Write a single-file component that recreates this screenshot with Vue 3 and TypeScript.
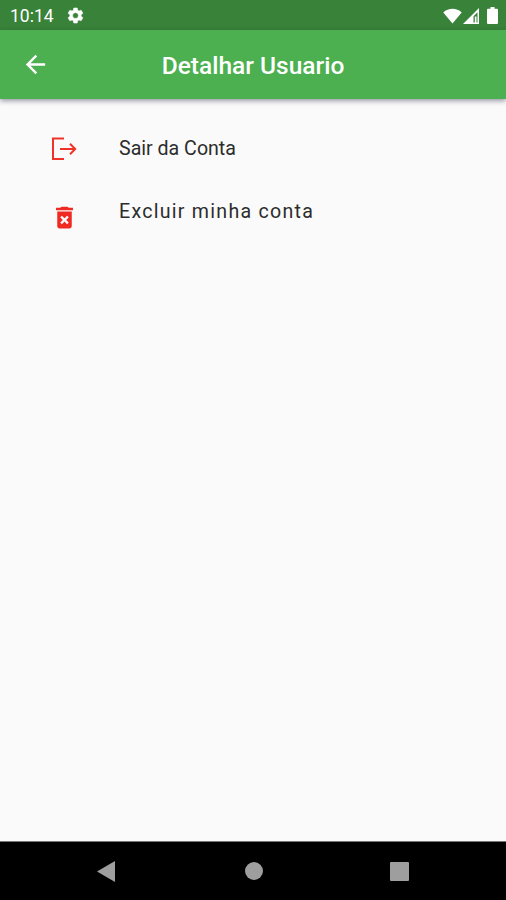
<script setup lang="ts">
import { ref } from 'vue'

type ActionIcon = 'logout' | 'delete'

interface AccountAction {
  label: string
  icon: ActionIcon
}

const title = ref('Detalhar Usuario')
const clock = ref('10:14')
const actions: AccountAction[] = [
  { label: 'Sair da Conta', icon: 'logout' },
  { label: 'Excluir minha conta', icon: 'delete' },
]
</script>

<template>
  <div class="screen">
    <header class="status-bar">
      <span class="clock">{{ clock }}</span>
      <svg class="gear" viewBox="0 0 24 24">
        <path d="M19.14 12.94c.04-.3.06-.61.06-.94 0-.32-.02-.64-.07-.94l2.03-1.58a.49.49 0 0 0 .12-.61l-1.92-3.32a.488.488 0 0 0-.59-.22l-2.39.96c-.5-.38-1.03-.7-1.62-.94l-.36-2.54a.484.484 0 0 0-.48-.41h-3.84c-.24 0-.43.17-.47.41l-.36 2.54c-.59.24-1.13.57-1.62.94l-2.39-.96a.488.488 0 0 0-.59.22L2.74 8.87c-.12.21-.08.47.12.61l2.03 1.58c-.05.3-.09.63-.09.94s.02.64.07.94l-2.03 1.58a.49.49 0 0 0-.12.61l1.92 3.32c.12.22.37.29.59.22l2.39-.96c.5.38 1.03.7 1.62.94l.36 2.54c.05.24.24.41.48.41h3.84c.24 0 .44-.17.47-.41l.36-2.54c.59-.24 1.13-.56 1.62-.94l2.39.96c.22.08.47 0 .59-.22l1.92-3.32a.49.49 0 0 0-.12-.61zM12 15.6A3.6 3.6 0 1 1 12 8.4a3.6 3.6 0 0 1 0 7.2z" />
      </svg>
      <div class="indicators">
        <svg class="wifi" viewBox="0 0 20 16"><path d="M10 16 .3 4.200C5.500-.9 14.500-.9 19.700 4.200z" /></svg>
        <svg class="signal" viewBox="0 0 16 16">
          <path fill-rule="evenodd" d="M16 0v16H0zM14.500 4.200 10.500 8.300V14.500h1.300V8.500h1.700v6h1z" />
        </svg>
        <svg class="battery" viewBox="0 0 11 17"><path d="M3.500 0h4v1.700H10q1 0 1 1V16q0 1-1 1H1q-1 0-1-1V2.700q0-1 1-1h2.500z" /></svg>
      </div>
    </header>

    <nav class="app-bar">
      <button class="back" type="button" aria-label="Voltar">
        <svg viewBox="0 0 24 24"><path d="M20 11H7.830l5.590-5.590L12 4l-8 8 8 8 1.410-1.410L7.830 13H20v-2z" /></svg>
      </button>
      <h1>{{ title }}</h1>
    </nav>

    <main class="actions">
      <button v-for="action in actions" :key="action.icon" class="action" :class="action.icon" type="button">
        <span class="icon-slot">
          <svg v-if="action.icon === 'logout'" class="logout-icon" viewBox="0 0 26 24">
            <path d="M13 1.500H2v20.500h11M9 12h15.500M19 6.800l5.200 5.200-5.200 5.200" />
          </svg>
          <svg v-else class="delete-icon" viewBox="0 0 24 24">
            <path d="M6 19c0 1.100.9 2 2 2h8c1.100 0 2-.9 2-2V7H6v12zm2.460-7.120 1.410-1.410L12 12.590l2.120-2.120 1.410 1.410L13.410 14l2.120 2.120-1.410 1.410L12 15.410l-2.120 2.120-1.410-1.410L10.590 14l-2.130-2.120zM15.500 4l-1-1h-5l-1 1H5v2h14V4z" />
          </svg>
        </span>
        <span class="label">{{ action.label }}</span>
      </button>
    </main>

    <footer class="system-nav">
      <svg class="nav-back" viewBox="0 0 18 21"><path d="M18 0v21L0 10.500z" /></svg>
      <span class="nav-home"></span>
      <span class="nav-recent"></span>
    </footer>
  </div>
</template>

<style>
body {
  margin: 0;
}
</style>

<style scoped>
.screen {
  display: flex;
  flex-direction: column;
  height: 100vh;
  background: #fafafa;
  font-family: Roboto, "Liberation Sans", sans-serif;
  overflow: hidden;
}
.status-bar {
  display: flex;
  align-items: center;
  box-sizing: border-box;
  height: 30px;
  padding: 1px 8px 0 10px;
  background: #388239;
  color: #fff;
}
.clock {
  width: 56px;
  padding-top: 1px;
  font-size: 17.5px;
  line-height: 28px;
}
.status-bar svg {
  display: block;
  fill: #fff;
}
.gear {
  width: 19px;
  height: 19px;
}
.gear path {
  stroke: #fff;
  stroke-width: 0.6px;
}
.indicators {
  display: flex;
  align-items: center;
  margin-left: auto;
}
.wifi {
  width: 19px;
  height: 16px;
}
.signal {
  width: 16px;
  height: 16px;
  margin-left: 1px;
}
.battery {
  width: 11px;
  height: 17px;
  margin-left: 8px;
}
.app-bar {
  display: grid;
  grid-template-columns: 70px 1fr 70px;
  align-items: center;
  height: 69px;
  background: #4caf50;
  box-shadow: 0 2px 5px rgba(30, 30, 60, 0.45);
}
button {
  padding: 0;
  border: 0;
  background: none;
  font: inherit;
  text-align: left;
}
.back {
  display: flex;
  justify-content: center;
}
.back svg {
  width: 29px;
  height: 29px;
  fill: #fff;
}
h1 {
  margin: 2px 0 0;
  color: #fff;
  font-size: 24.5px;
  font-weight: 500;
  line-height: 32px;
  text-align: center;
  white-space: nowrap;
}
.actions {
  flex: 1;
  display: flex;
  flex-direction: column;
  padding: 18px 40px 0;
}
.action {
  display: flex;
  height: 63px;
  color: #2c2c2c;
  font-size: 19.6px;
  line-height: 64px;
}
.icon-slot {
  display: flex;
  align-items: center;
  justify-content: center;
  width: 48px;
  margin-right: 31px;
}
.logout .icon-slot {
  height: 63px;
}
.delete .icon-slot {
  height: 75px;
}
.logout-icon {
  width: 26px;
  height: 24px;
  fill: none;
  stroke: #f03329;
  stroke-width: 2;
}
.delete-icon {
  width: 29px;
  height: 29px;
  fill: #f02a20;
}
.delete .label {
  letter-spacing: 1.26px;
}
.system-nav {
  display: flex;
  align-items: center;
  box-sizing: border-box;
  height: 59px;
  padding: 0 97px;
  border-top: 1px solid #777;
  background: #000;
  justify-content: space-between;
}
.nav-back {
  width: 18px;
  height: 21px;
  fill: #9e9e9e;
}
.nav-home {
  width: 18px;
  height: 18px;
  margin-left: 2px;
  border-radius: 50%;
  background: #9e9e9e;
}
.nav-recent {
  width: 19px;
  height: 19px;
  border-radius: 1px;
  background: #9e9e9e;
}
</style>
